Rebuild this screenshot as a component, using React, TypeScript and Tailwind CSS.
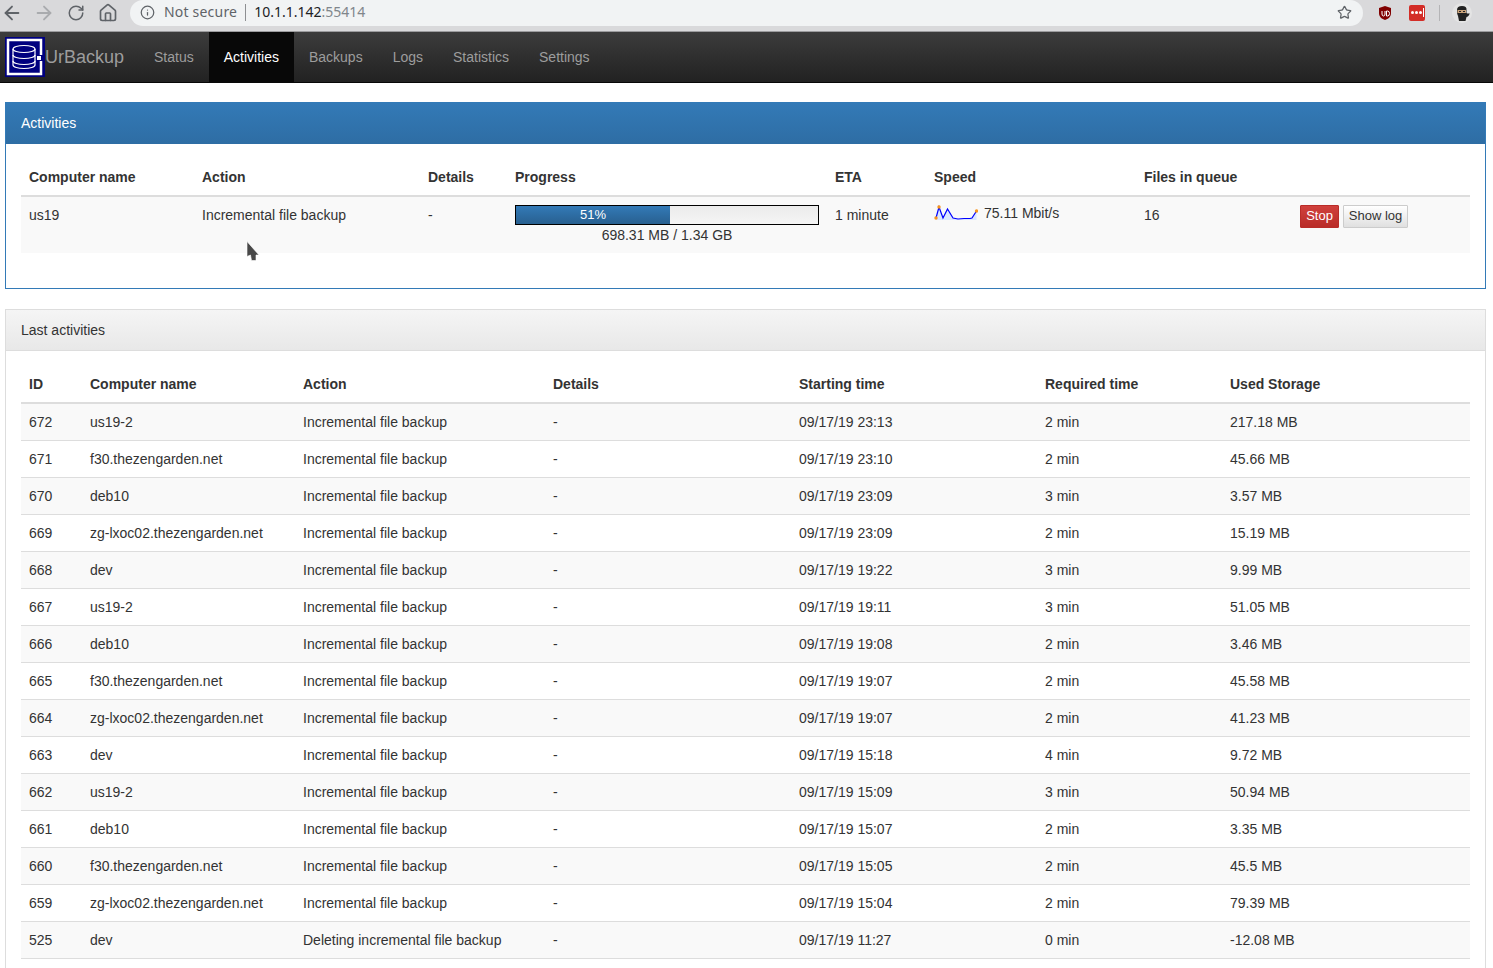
import { ArrowLeft, ArrowRight, RotateCw, House, Info, Star } from 'lucide-react';

const lastActivities = [
  ['672', 'us19-2', 'Incremental file backup', '09/17/19 23:13', '2 min', '217.18 MB'],
  ['671', 'f30.thezengarden.net', 'Incremental file backup', '09/17/19 23:10', '2 min', '45.66 MB'],
  ['670', 'deb10', 'Incremental file backup', '09/17/19 23:09', '3 min', '3.57 MB'],
  ['669', 'zg-lxoc02.thezengarden.net', 'Incremental file backup', '09/17/19 23:09', '2 min', '15.19 MB'],
  ['668', 'dev', 'Incremental file backup', '09/17/19 19:22', '3 min', '9.99 MB'],
  ['667', 'us19-2', 'Incremental file backup', '09/17/19 19:11', '3 min', '51.05 MB'],
  ['666', 'deb10', 'Incremental file backup', '09/17/19 19:08', '2 min', '3.46 MB'],
  ['665', 'f30.thezengarden.net', 'Incremental file backup', '09/17/19 19:07', '2 min', '45.58 MB'],
  ['664', 'zg-lxoc02.thezengarden.net', 'Incremental file backup', '09/17/19 19:07', '2 min', '41.23 MB'],
  ['663', 'dev', 'Incremental file backup', '09/17/19 15:18', '4 min', '9.72 MB'],
  ['662', 'us19-2', 'Incremental file backup', '09/17/19 15:09', '3 min', '50.94 MB'],
  ['661', 'deb10', 'Incremental file backup', '09/17/19 15:07', '2 min', '3.35 MB'],
  ['660', 'f30.thezengarden.net', 'Incremental file backup', '09/17/19 15:05', '2 min', '45.5 MB'],
  ['659', 'zg-lxoc02.thezengarden.net', 'Incremental file backup', '09/17/19 15:04', '2 min', '79.39 MB'],
  ['525', 'dev', 'Deleting incremental file backup', '09/17/19 11:27', '0 min', '-12.08 MB'],
];

const navItems = ['Status', 'Activities', 'Backups', 'Logs', 'Statistics', 'Settings'];

const BrowserBar = () => (
  <div className="flex h-8 items-start border-b border-[#9c9c9e] bg-[#d9d9db] font-['Noto_Sans',sans-serif]">
    <div className="-ml-1 flex h-[25px] w-[134px] items-center text-[#5f6368]">
      <span className="flex w-8 justify-center"><ArrowLeft size={22} /></span>
      <span className="flex w-8 justify-center text-[#a9abae]"><ArrowRight size={22} /></span>
      <span className="flex w-8 justify-center"><RotateCw size={18} /></span>
      <span className="flex w-8 justify-center"><House size={20} /></span>
    </div>
    <div className="flex h-[26px] w-[1233px] items-center rounded-[13px] bg-[#f1f3f4] pb-[2px] text-sm">
      <Info size={15} className="ml-[10px] text-[#5f6368]" />
      <span className="ml-[9px] tracking-[0.2px] text-[#5f6368]">Not secure</span>
      <span className="mx-2 h-[17px] w-px bg-[#8d8f92]" />
      <span className="text-[#202124]">10.1.1.142</span>
      <span className="text-[#80868b]">:55414</span>
      <Star size={15} className="ml-auto mr-[11px] text-[#5f6368]" />
    </div>
    <div className="flex h-[25px] flex-1 items-center">
      <svg width="16" height="16" viewBox="0 0 16 16" className="ml-[14px]">
        <path d="M8 1l6 2v5c0 4-3 6-6 7-3-1-6-3-6-7V3z" fill="#800000" />
        <path d="M5 6v3q0 2 1.500 2t1.500-2V6M9.500 6h1q2 0 2 2.500t-2 2.500h-1z" fill="none" stroke="#fff" strokeWidth="1" />
      </svg>
      <div className="ml-4 flex h-4 w-4 items-center justify-center gap-px rounded-[2px] bg-[#d32d27]">
        <span className="h-[3px] w-[3px] rounded-full bg-white" />
        <span className="h-[3px] w-[3px] rounded-full bg-white" />
        <span className="h-[3px] w-[3px] rounded-full bg-white" />
        <span className="h-[9px] w-px bg-white" />
      </div>
      <span className="ml-[14px] h-[16px] w-px bg-[#b4b4b6]" />
      <svg width="20" height="20" viewBox="0 0 20 20" className="ml-[12px]">
        <circle cx="10" cy="10" r="10" fill="#e4e4e4" />
        <path d="M5 7q0-4 5-4t4.500 4v3q2 1 3 0 0 3-3 4l-1 4H7l-1-5q-1-2-1-4z" fill="#222222" />
        <rect x="5.500" y="7" width="8.500" height="3" fill="#c9a27a" />
        <rect x="7" y="8" width="2" height="1" fill="#222" />
        <rect x="11" y="8" width="2" height="1" fill="#222" />
      </svg>
    </div>
  </div>
);

const Logo = () => (
  <svg width="40" height="40" viewBox="0 0 40 40" className="shrink-0">
    <rect width="40" height="40" fill="#00007f" />
    <path d="M36 18V3H3v34h33V24" fill="none" stroke="#fff" strokeWidth="2.500" />
    <g fill="none" stroke="#fff" strokeWidth="1.200">
      <ellipse cx="19" cy="12" rx="11" ry="3.500" />
      <path d="M8 12v16c0 2 5 3.500 11 3.500s11-1.500 11-3.500V12" />
      <path d="M8 18c0 2 5 3.500 11 3.500s11-1.500 11-3.500M8 24c0 2 5 3.500 11 3.500s11-1.500 11-3.500" />
    </g>
    <rect x="32" y="19" width="4" height="4" fill="#fff" />
  </svg>
);

const Navbar = () => (
  <nav className="flex h-[51px] items-stretch border-b border-[#080808] bg-gradient-to-b from-[#3c3c3c] to-[#222222]">
    <div className="ml-[5px] flex w-[134px] items-center">
      <Logo />
      <span className="text-lg text-[#9d9d9d]">UrBackup</span>
    </div>
    <ul className="flex">
      {navItems.map(item => (
        <li
          key={item}
          className={
            item === 'Activities'
              ? 'flex items-center bg-[#080808] px-[15px] text-white'
              : 'flex items-center px-[15px] text-[#9d9d9d]'
          }
        >
          {item}
        </li>
      ))}
    </ul>
  </nav>
);

const Sparkline = () => (
  <svg width="44" height="20" viewBox="0 0 44 20" className="mr-[6px] shrink-0">
    <path d="M2 15 L5 4 L9 15 L13.500 6 L19 15 L24 16 L30 15.500 L36 15.500 L38 15 L42.500 8 V17 H2 Z" fill="#dbe6ff" />
    <path d="M2 15 L5 4 L9 15 L13.500 6 L19 15 L24 16 L30 15.500 L36 15.500 L38 15 L42.500 8" fill="none" stroke="#0000ff" strokeWidth="1.200" />
    <circle cx="2" cy="15" r="1.700" fill="#f7941d" />
    <circle cx="5" cy="4" r="1.700" fill="#f7941d" />
    <circle cx="42.500" cy="8" r="1.700" fill="#f7941d" />
  </svg>
);

const ActivitiesPanel = () => (
  <section className="h-[187px] border border-[#337ab7]">
    <div className="flex h-[41px] items-center bg-gradient-to-b from-[#337ab7] to-[#2e6da4] pb-[2px] pl-[15px] text-white">
      Activities
    </div>
    <div className="px-[15px] pt-[14px]">
      <table className="w-full table-fixed border-collapse text-left">
        <thead>
          <tr className="h-[38px] border-b-2 border-[#dddddd]">
            <th className="w-[173px] px-2 font-bold">Computer name</th>
            <th className="w-[226px] px-2 font-bold">Action</th>
            <th className="w-[87px] px-2 font-bold">Details</th>
            <th className="w-[320px] px-2 font-bold">Progress</th>
            <th className="w-[99px] px-2 font-bold">ETA</th>
            <th className="w-[210px] px-2 font-bold">Speed</th>
            <th className="w-[156px] px-2 font-bold">Files in queue</th>
            <th className="px-2" />
          </tr>
        </thead>
        <tbody>
          <tr className="h-[57px] bg-[#f9f9f9] align-top">
            <td className="px-2 pt-2">us19</td>
            <td className="px-2 pt-2">Incremental file backup</td>
            <td className="px-2 pt-2">-</td>
            <td className="px-2 pt-2">
              <div className="h-5 w-full border border-black bg-gradient-to-b from-[#ebebeb] to-[#f5f5f5]">
                <div className="flex h-full w-[51%] items-center justify-center bg-gradient-to-b from-[#337ab7] to-[#286090] text-[13px] text-white">
                  51%
                </div>
              </div>
              <div className="mt-px text-center leading-[18px]">698.31 MB / 1.34 GB</div>
            </td>
            <td className="px-2 pt-2">1 minute</td>
            <td className="px-2 pt-2">
              <div className="-mt-[2px] flex h-5 items-center">
                <Sparkline />
                75.11 Mbit/s
              </div>
            </td>
            <td className="px-2 pt-2">16</td>
            <td className="px-2 pt-2">
              <div className="flex gap-1">
                <button className="h-[23px] w-[39px] rounded-[1px] border border-[#b92c28] bg-gradient-to-b from-[#d0403c] to-[#b92c28] text-[13px] text-white">
                  Stop
                </button>
                <button className="h-[23px] w-[65px] rounded-[1px] border border-[#cccccc] bg-gradient-to-b from-white to-[#e0e0e0] text-[13px] text-[#333333]">
                  Show log
                </button>
              </div>
            </td>
          </tr>
        </tbody>
      </table>
    </div>
  </section>
);

const LastActivitiesPanel = () => (
  <section className="mt-5 border border-[#dddddd]">
    <div className="flex h-[41px] items-center border-b border-[#dddddd] bg-gradient-to-b from-[#f5f5f5] to-[#e8e8e8] pl-[15px]">
      Last activities
    </div>
    <div className="p-[15px] pt-[14px]">
      <table className="w-full table-fixed border-collapse text-left">
        <thead>
          <tr className="h-[38px] border-b-2 border-[#dddddd]">
            <th className="w-[61px] px-2 font-bold">ID</th>
            <th className="w-[213px] px-2 font-bold">Computer name</th>
            <th className="w-[250px] px-2 font-bold">Action</th>
            <th className="w-[246px] px-2 font-bold">Details</th>
            <th className="w-[246px] px-2 font-bold">Starting time</th>
            <th className="w-[185px] px-2 font-bold">Required time</th>
            <th className="px-2 font-bold">Used Storage</th>
          </tr>
        </thead>
        <tbody>
          {lastActivities.map(([id, name, action, start, took, storage]) => (
            <tr key={id} className="h-[37px] border-b border-[#dddddd] odd:bg-[#f9f9f9]">
              <td className="px-2">{id}</td>
              <td className="px-2">{name}</td>
              <td className="px-2">{action}</td>
              <td className="px-2">-</td>
              <td className="px-2">{start}</td>
              <td className="px-2">{took}</td>
              <td className="px-2">{storage}</td>
            </tr>
          ))}
        </tbody>
      </table>
    </div>
  </section>
);

export default function App() {
  return (
    <div className="relative h-[968px] overflow-hidden bg-white font-['Liberation_Sans',sans-serif] text-sm text-[#333333]">
      <BrowserBar />
      <Navbar />
      <main className="ml-[5px] mr-[7px] mt-[19px]">
        <ActivitiesPanel />
        <LastActivitiesPanel />
      </main>
      {/* mouse pointer */}
      <svg width="14" height="21" viewBox="0 0 14 21" className="absolute left-[246px] top-[241px]">
        <path d="M1 0.500v15l3.500-1.500 1 5.500h4.500v-5.500h3z" fill="#484848" stroke="#ffffff" strokeWidth="0.600" />
      </svg>
    </div>
  );
}
